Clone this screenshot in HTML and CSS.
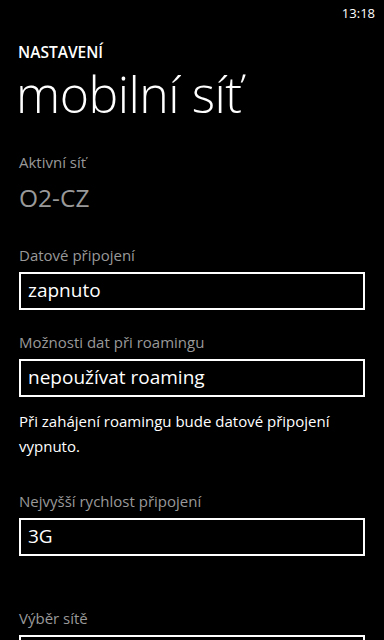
FILE: index.html
```html
<!DOCTYPE html>
<html lang="cs">
<head>
<meta charset="utf-8">
<title>mobilní síť</title>
<link rel="stylesheet" href="styles.css">
</head>
<body>
<div class="phone">
  <div class="statusbar"><span class="time">13:18</span></div>
  <div class="header">
    <div class="app-title">NASTAVENÍ</div>
    <div class="page-title">mobilní síť</div>
  </div>
  <div class="content">
    <div class="label first">Aktivní síť</div>
    <div class="value">O2-CZ</div>

    <div class="label">Datové připojení</div>
    <div class="picker">zapnuto</div>

    <div class="label">Možnosti dat při roamingu</div>
    <div class="picker">nepoužívat roaming</div>

    <p class="note">Při zahájení roamingu bude datové připojení vypnuto.</p>

    <div class="label">Nejvyšší rychlost připojení</div>
    <div class="picker">3G</div>

    <div class="label spaced">Výběr sítě</div>
    <div class="picker"></div>
  </div>
</div>
</body>
</html>
```
FILE: styles.css
```css
html, body {
  margin: 0;
  padding: 0;
  background: #000;
}
body {
  font-family: "Open Sans", "Noto Sans", sans-serif;
  color: #fff;
}
.phone {
  width: 384px;
  height: 640px;
  overflow: hidden;
  background: #000;
}
.statusbar {
  height: 26px;
  display: flex;
  justify-content: flex-end;
  align-items: center;
  padding-right: 9px;
}
.time {
  font-size: 13px;
  line-height: 16px;
  color: #fff;
}
.header {
  padding-left: 18px;
}
.app-title {
  margin-top: 16px;
  font-size: 15.5px;
  font-weight: 600;
  line-height: 20px;
}
.page-title {
  margin-top: 2px;
  font-size: 50px;
  font-weight: 300;
  line-height: 60px;
  margin-left: -2px;
  letter-spacing: -0.5px;
}
.content {
  padding: 0 19px;
}
.label {
  font-size: 15px;
  line-height: 20px;
  color: #999;
  margin-top: 22px;
}
.label.first {
  margin-top: 28px;
}
.label.spaced {
  margin-top: 52px;
}
.value {
  font-size: 24.5px;
  line-height: 32px;
  color: #999;
  margin-top: 10px;
  margin-bottom: 31px;
}
.value + .label {
  margin-top: 0;
}
.picker {
  box-sizing: border-box;
  height: 38px;
  border: 2px solid #fff;
  margin-top: 7px;
  padding-left: 7px;
  font-size: 19px;
  line-height: 33px;
  color: #fff;
}
.note {
  margin: 12px 0 32px 0;
  font-size: 15px;
  line-height: 25px;
  color: #fff;
}
```
